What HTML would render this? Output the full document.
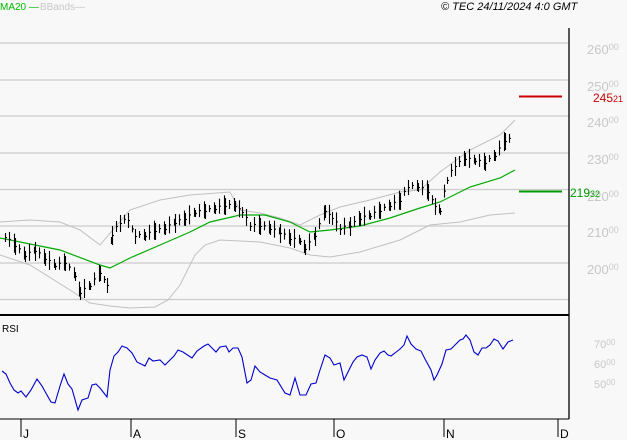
<!DOCTYPE html>
<html><head><style>
body{margin:0;background:#f8f8f8;width:627px;height:440px;overflow:hidden;font-family:"Liberation Sans",sans-serif}
svg{display:block}
</style></head><body>
<svg id="s" width="627" height="440" xmlns="http://www.w3.org/2000/svg" font-family="Liberation Sans, sans-serif">
<rect width="627" height="440" fill="#f8f8f8"/>
<g stroke="#cccccc" stroke-width="1.2">
<line x1="0" y1="43" x2="569" y2="43"/><line x1="0" y1="80" x2="569" y2="80"/><line x1="0" y1="116" x2="569" y2="116"/><line x1="0" y1="153" x2="569" y2="153"/><line x1="0" y1="189.5" x2="569" y2="189.5"/><line x1="0" y1="226" x2="569" y2="226"/><line x1="0" y1="263" x2="569" y2="263"/><line x1="0" y1="299.5" x2="569" y2="299.5"/>
</g>
<g fill="#c8c8c8" font-size="13">
<text x="587" y="54">260<tspan font-size="9" dy="-4">00</tspan></text>
<text x="587" y="91">250<tspan font-size="9" dy="-4">00</tspan></text>
<text x="587" y="127">240<tspan font-size="9" dy="-4">00</tspan></text>
<text x="587" y="164">230<tspan font-size="9" dy="-4">00</tspan></text>
<text x="587" y="201">220<tspan font-size="9" dy="-4">00</tspan></text>
<text x="587" y="237">210<tspan font-size="9" dy="-4">00</tspan></text>
<text x="587" y="274">200<tspan font-size="9" dy="-4">00</tspan></text>
<text x="594" y="348" font-size="11">70<tspan font-size="8" dy="-3">00</tspan></text>
<text x="594" y="368" font-size="11">60<tspan font-size="8" dy="-3">00</tspan></text>
<text x="594" y="388" font-size="11">50<tspan font-size="8" dy="-3">00</tspan></text>
</g>
<line x1="519" y1="96.5" x2="562" y2="96.5" stroke="#cc0000" stroke-width="2"/>
<text x="593" y="102" fill="#cc0000" font-size="12">245<tspan font-size="9">21</tspan></text>
<line x1="519" y1="191.5" x2="562" y2="191.5" stroke="#009900" stroke-width="2"/>
<text x="570" y="197" fill="#009900" font-size="12">219<tspan font-size="9">32</tspan></text>
<polyline fill="none" stroke="#c0c0c0" points="0,222 30,220 60,222 80,230 100,245 130,210 160,200 190,195 230,192 240,210 260,213 280,218 300,225 320,215 340,207 370,200 400,192 420,190 440,172 470,150 500,135 515,120"/>
<polyline fill="none" stroke="#c0c0c0" points="0,255 30,265 70,290 90,303 110,306 130,308 155,307 168,300 180,285 195,255 205,245 220,240 260,242 290,248 310,255 330,257 360,252 400,240 430,225 460,222 490,215 515,213"/>
<polyline fill="none" stroke="#00aa00" stroke-width="1.2" points="0,238 30,244 60,250 100,265 110,268 130,258 160,245 190,232 210,222 240,215 265,215 290,222 310,232 330,230 360,226 390,218 420,208 440,202 470,187 500,178 515,170"/>
<g id="bars" stroke="#000" stroke-width="1.1"></g>
<line x1="569" y1="28" x2="569" y2="419" stroke="#000" stroke-width="1.3"/>
<line x1="0" y1="315" x2="569" y2="315" stroke="#000" stroke-width="2"/>
<line x1="0" y1="419" x2="569" y2="419" stroke="#000" stroke-width="1"/>
<g stroke="#000"><line x1="21" y1="419" x2="21" y2="437"/><line x1="131" y1="419" x2="131" y2="437"/><line x1="236" y1="419" x2="236" y2="437"/><line x1="334" y1="419" x2="334" y2="437"/><line x1="444" y1="419" x2="444" y2="437"/><line x1="558" y1="419" x2="558" y2="437"/></g>
<g font-size="12" fill="#000"><text x="23" y="438">J</text><text x="133" y="438">A</text><text x="238" y="438">S</text><text x="336" y="438">O</text><text x="446" y="438">N</text><text x="560" y="438">D</text></g>
<text x="2" y="332" font-size="10">RSI</text>
<polyline fill="none" stroke="#0000cc" stroke-width="1.1" points="2,371 6,374 10,383 14,390 18,393 21,391 26,397 31,390 37,379 42,386 47,395 51,402 55,403 60,386 64,374 68,384 72,389 78,410 82,400 88,398 92,385 96,384 100,388 107,397 110,370 114,356 118,352 122,346 127,348 132,353 137,362 145,366 149,358 153,361 160,360 165,365 170,360 174,356 178,350 183,352 192,358 197,351 204,346 208,344 212,348 216,352 220,347 226,346 229,352 233,348 238,348 242,357 247,383 251,380 255,366 260,372 265,375 270,378 277,380 285,393 290,395 295,378 300,395 306,395 311,384 316,383 320,370 325,355 330,358 334,365 340,363 344,380 349,370 353,362 357,357 362,355 367,357 371,369 375,360 380,353 384,351 388,355 391,356 395,353 400,349 404,345 407,336 411,344 416,349 421,351 425,359 431,370 434,380 437,375 442,364 446,350 451,349 455,345 460,340 463,339 466,335 470,340 474,352 478,355 482,348 486,348 490,345 494,339 498,341 503,349 508,342 513,340"/>
<text x="0" y="10" font-size="10" fill="#00bb00">MA20 —</text>
<text x="40" y="10" font-size="10" fill="#c8c8c8">BBands—</text>
<text x="441" y="10" font-size="11" font-style="italic" fill="#000">© TEC 24/11/2024 4:0 GMT</text>
</svg>
<script>
var pts=[[5,236],[15,245],[25,255],[35,250],[45,258],[55,265],[65,262],[75,275],[80,292],[90,285],[100,272],[107,285],[112,235],[120,222],[128,218],[135,235],[145,235],[155,230],[165,228],[175,222],[185,218],[195,212],[205,210],[215,208],[225,205],[235,205],[242,212],[250,225],[260,225],[270,228],[280,232],[290,238],[300,240],[305,248],[315,235],[325,210],[332,218],[340,228],[350,225],[360,218],[370,215],[380,210],[390,205],[400,200],[408,185],[418,185],[428,190],[435,205],[440,210],[447,180],[455,165],[465,158],[475,160],[485,162],[495,155],[505,140],[513,138]];
var g=document.getElementById('bars'),h='';
for(var i=0;i<pts.length-1;i++){var a=pts[i],b=pts[i+1];for(var x=a[0];x<b[0];x+=4.3){var t=(x-a[0])/(b[0]-a[0]);var xi=Math.round(x)+0.5;var y=a[1]+(b[1]-a[1])*t+((xi*7)%5-2);var r=3+(xi*13)%7;h+='<line x1="'+xi+'" y1="'+(y-r).toFixed(1)+'" x2="'+xi+'" y2="'+(y+r).toFixed(1)+'"/><line x1="'+xi+'" y1="'+y.toFixed(1)+'" x2="'+(xi+1.5)+'" y2="'+y.toFixed(1)+'"/>';}}
g.innerHTML=h;
</script>
</body></html>
